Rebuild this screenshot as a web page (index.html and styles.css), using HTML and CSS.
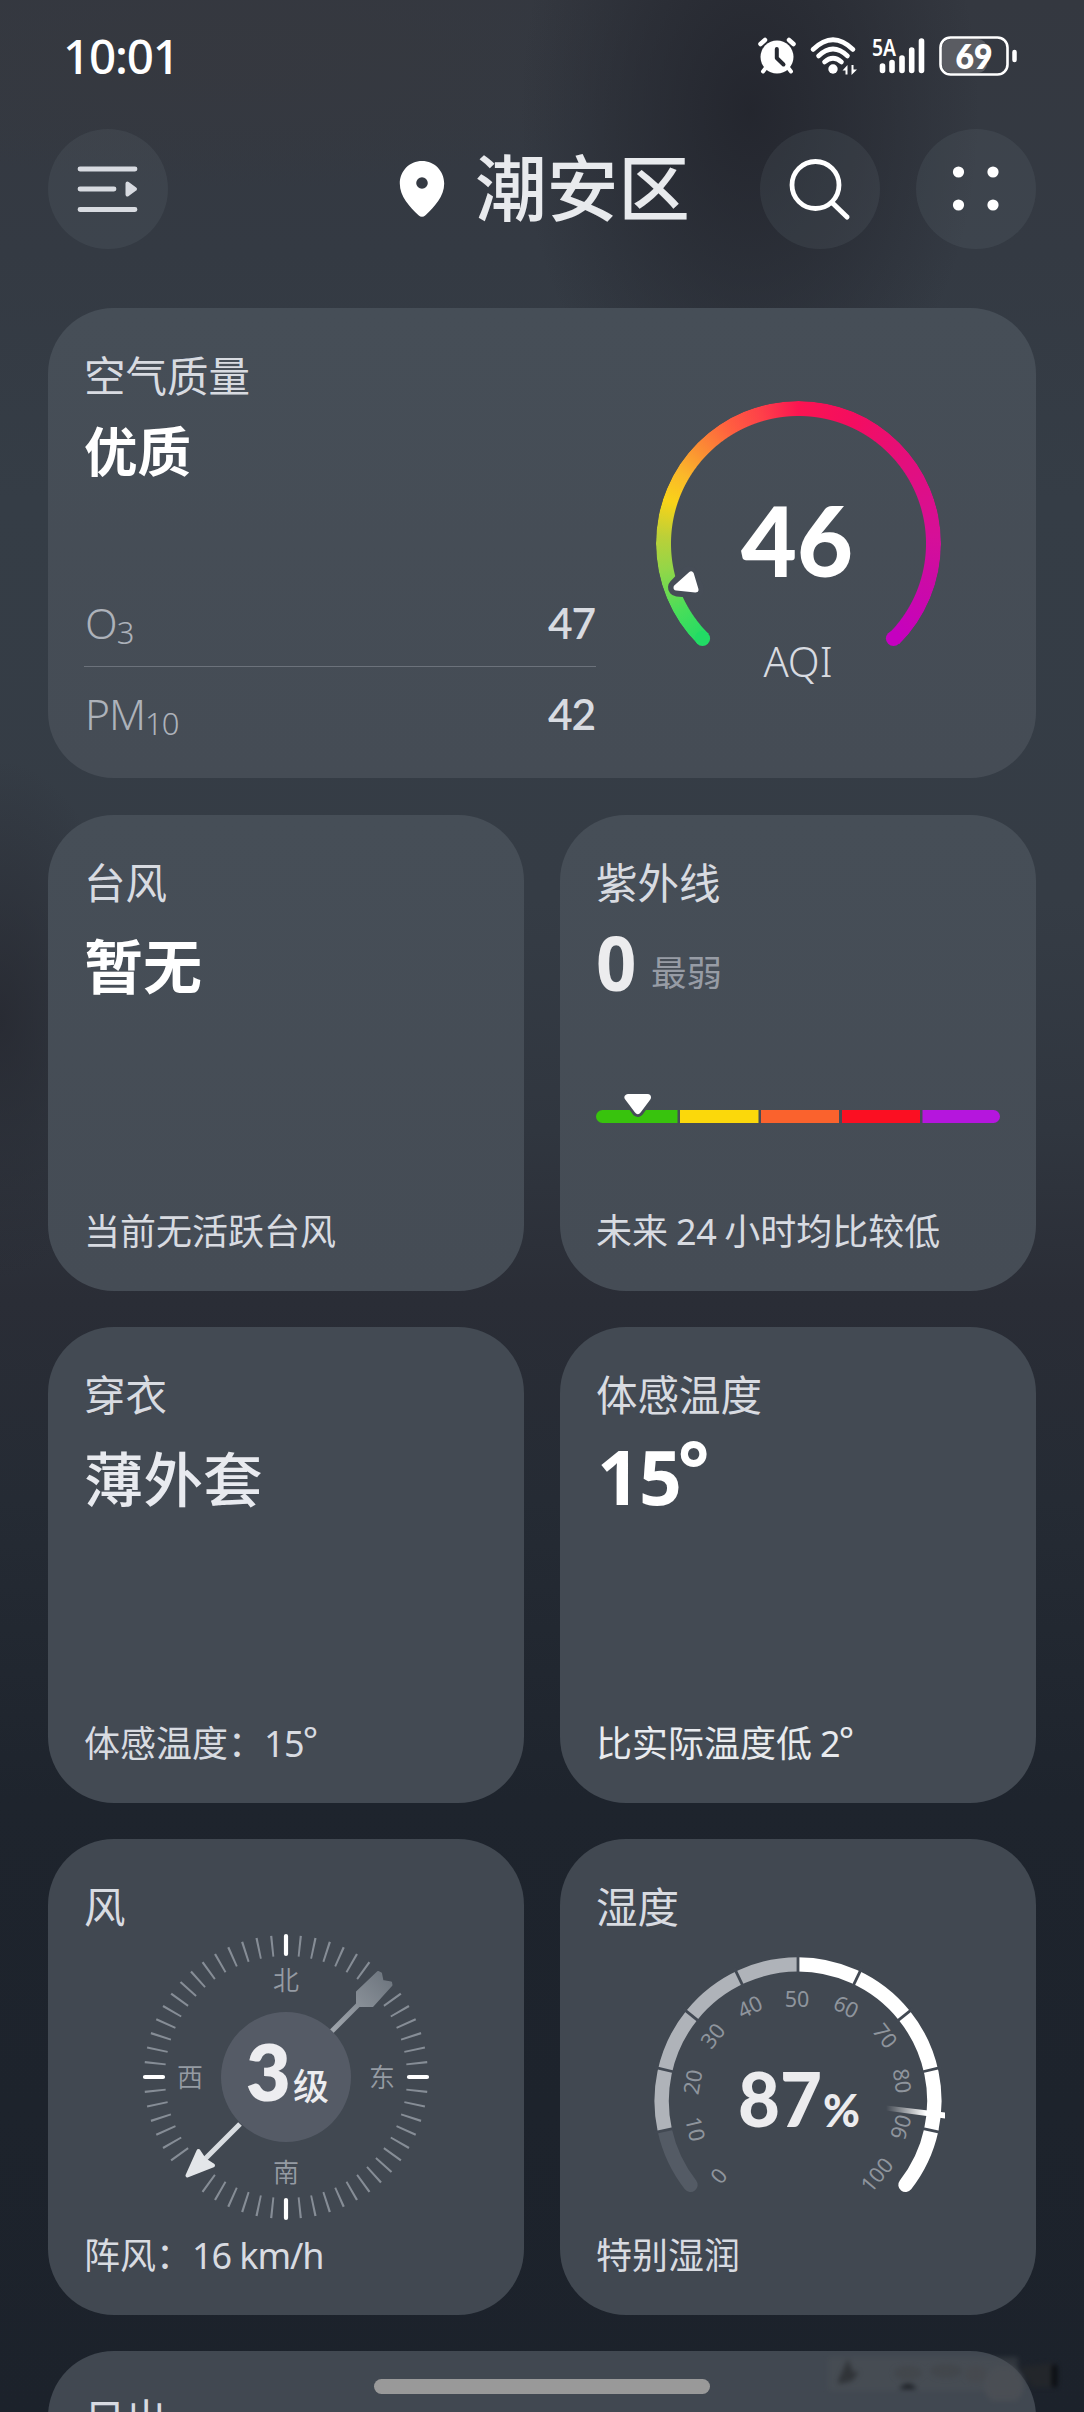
FILE: index.html
```
<!DOCTYPE html>
<html lang="zh-CN">
<head>
<meta charset="utf-8">
<title>天气</title>
<link rel="stylesheet" href="styles.css">
</head>
<body>
<div class="screen">
  <div class="status">
    <span class="clock">10:01</span>
    <div class="indicators">
      <svg class="alarm" width="38" height="38" viewBox="0 0 38 38">
        <g stroke="#fff" stroke-linecap="round" fill="none">
          <path d="M2.500 7 7 3M35.500 7 31 3" stroke-width="4.500"/>
          <path d="M8.500 30 5 34.500M29.500 30 33 34.500" stroke-width="4"/>
        </g>
        <circle cx="19" cy="20" r="16.500" fill="#fff"/>
        <path d="M18.800 12V21L25.500 27.500" fill="none" stroke="#262931" stroke-width="4" stroke-linecap="round" stroke-linejoin="round"/>
      </svg>
      <svg class="wifi" width="47" height="38" viewBox="0 0 47 38">
        <g fill="none" stroke="#fff" stroke-width="4.600" stroke-linecap="round">
          <path d="M3 12.500Q23 -7 43 12.500"/>
          <path d="M8.500 19Q23 5 37.500 19"/>
          <path d="M14.500 25Q23 17.500 31.500 25"/>
        </g>
        <circle cx="23" cy="32" r="4.700" fill="#fff"/>
        <path d="M32.500 33.500 37.500 28V37.500H35.500V33.500ZM47 32.500 41.500 38V28H43.500V32.500Z" fill="#fff"/>
      </svg>
      <svg class="signal" width="53" height="38" viewBox="0 0 53 38">
        <text x="0" y="19" class="net" textLength="24" lengthAdjust="spacingAndGlyphs">5A</text>
        <path d="M10.500 29V33.500M20 25.500V33.500M30 21V33.500M39.700 13V33.500M49.500 4V33.500" stroke="#fff" stroke-width="5.600" stroke-linecap="round"/>
      </svg>
      <svg class="battery" width="78" height="42" viewBox="0 0 78 42">
        <rect x="3" y="4" width="45" height="34" rx="9" fill="#5a5c62"/>
        <rect x="1.500" y="2.500" width="67" height="37" rx="10" fill="none" stroke="#fff" stroke-width="2.600"/>
        <path d="M75.500 17V25" stroke="#fff" stroke-width="4.500" stroke-linecap="round"/>
        <text x="35" y="34" class="charge" text-anchor="middle" textLength="37" lengthAdjust="spacingAndGlyphs">69</text>
      </svg>
    </div>
  </div>

  <header class="topbar">
    <button class="round" aria-label="城市列表">
      <svg width="120" height="120" viewBox="0 0 120 120">
        <path d="M32 40H87M32 60H66M32 80.500H87" stroke="#d8dbe1" stroke-width="4.800" stroke-linecap="round"/>
        <path d="M79.500 54.500 87 60 79.500 65.500Z" fill="#d8dbe1" stroke="#d8dbe1" stroke-width="4" stroke-linejoin="round"/>
      </svg>
    </button>
    <div class="place">
      <svg width="46" height="58" viewBox="0 0 46 58">
        <path fill="#fff" fill-rule="evenodd" d="M23 1C10.500 1 .8 11 .8 23.500.8 36.500 10.500 46.500 19.500 55.300Q23 58.300 26.500 55.300C35.500 46.500 45.200 36.500 45.200 23.500 45.200 11 35.500 1 23 1ZM23 17.200a5.800 5.800 0 1 0 0 11.600 5.800 5.800 0 0 0 0-11.600Z"/>
      </svg>
      <h1>潮安区</h1>
    </div>
    <div class="actions">
      <button class="round" aria-label="搜索">
        <svg width="120" height="120" viewBox="0 0 120 120" fill="none" stroke="#fff" stroke-linecap="round">
          <circle cx="55.500" cy="56" r="23.500" stroke-width="4.800"/>
          <path d="M73 74.500 87 88" stroke-width="5"/>
        </svg>
      </button>
      <button class="round" aria-label="更多">
        <svg width="120" height="120" viewBox="0 0 120 120" fill="#fff">
          <circle cx="42.500" cy="43" r="5.600"/><circle cx="77" cy="43" r="5.600"/>
          <circle cx="42.500" cy="76" r="5.600"/><circle cx="77" cy="76" r="5.600"/>
        </svg>
      </button>
    </div>
  </header>

  <main class="cards">
    <section class="card air">
      <div class="air-info">
        <h2>空气质量</h2>
        <p class="value grade">优质</p>
        <dl class="pollutants">
          <div><dt>O<sub>3</sub></dt><dd>47</dd></div>
          <div><dt>PM<sub>10</sub></dt><dd>42</dd></div>
        </dl>
      </div>
      <div class="air-gauge">
        <div class="spectrum"></div>
        <svg class="overlay" width="300" height="300" viewBox="-150 -150 300 300">
          <circle cx="-95.500" cy="95.500" r="7.600" fill="#22dc65"/>
          <circle cx="95.500" cy="95.500" r="7.600" fill="#c500c0"/>
          <path d="M-121 44.500-109 32-103 46Z" fill="#464d57" stroke="#464d57" stroke-width="18" stroke-linejoin="round"/>
          <path d="M-121.500 44.500-107 31.500-102.500 46.500Z" fill="#fff" stroke="#fff" stroke-width="6" stroke-linejoin="round"/>
          <text class="aqi-number" x="-1" y="34" text-anchor="middle" textLength="112" lengthAdjust="spacingAndGlyphs">46</text>
          <text class="aqi-unit" x="0" y="134" text-anchor="middle">AQI</text>
        </svg>
      </div>
    </section>

    <section class="card">
      <h2>台风</h2>
      <p class="value">暂无</p>
      <p class="note">当前无活跃台风</p>
    </section>

    <section class="card">
      <h2>紫外线</h2>
      <p class="value uv-value"><b class="soft">0</b><span class="level">最弱</span></p>
      <svg class="uv" width="404" height="34" viewBox="0 0 404 34">
        <path d="M6.500 17H81.500V30H6.500A6.500 6.500 0 0 1 6.500 17Z" fill="#38c30d"/>
        <path d="M84 17H162.500V30H84Z" fill="#fbd80b"/>
        <path d="M165 17H243V30H165Z" fill="#fa622d"/>
        <path d="M246 17H324V30H246Z" fill="#fb0f22"/>
        <path d="M326.500 17H397.500A6.500 6.500 0 0 1 397.500 30H326.500Z" fill="#b516dd"/>
        <path d="M32 4.500H51.500L41.800 18Z" fill="#464d57" stroke="#464d57" stroke-width="12" stroke-linejoin="round"/>
        <path d="M32 4.500H51.500L41.800 17.500Z" fill="#fff" stroke="#fff" stroke-width="7" stroke-linejoin="round"/>
      </svg>
      <p class="note">未来 <span class="latin">24</span> 小时均比较低</p>
    </section>

    <section class="card">
      <h2>穿衣</h2>
      <p class="value medium">薄外套</p>
      <p class="note">体感温度：<span class="latin">15<i class="deg">°</i></span></p>
    </section>

    <section class="card">
      <h2>体感温度</h2>
      <p class="value number">15<i class="deg">°</i></p>
      <p class="note bright">比实际温度低 <span class="latin">2<i class="deg">°</i></span></p>
    </section>

    <section class="card">
      <h2>风</h2>
      <svg class="compass" width="300" height="300" viewBox="-150 -150 300 300">
        <defs>
          <linearGradient id="tail" gradientUnits="userSpaceOnUse" x1="45" y1="-45" x2="104" y2="-104">
            <stop offset="0" stop-color="#a0a6ad"/><stop offset="1" stop-color="#6c747d"/>
          </linearGradient>
        </defs>
        <circle r="131.500" class="ticks" pathLength="360" transform="rotate(-90)"/>
        <path d="M0-141V-123M0 141V123M-141 0H-123M141 0H123" stroke="#fff" stroke-width="4.200" stroke-linecap="round"/>
        <path d="M45-45 72-72" stroke="url(#tail)" stroke-width="5"/>
        <path d="M71-71V-85L92-105 95-103.500 96.500-96 105-94.500 105.500-92 86.500-71Z" fill="url(#tail)" stroke="url(#tail)" stroke-width="2" stroke-linejoin="round"/>
        <path d="M-46 47-82 83" stroke="#d9dde1" stroke-width="5.200"/>
        <path d="M-98.500 98.500-87.500 74-81.500 83-73 88.500Z" fill="#e3e6e9" stroke="#e3e6e9" stroke-width="4" stroke-linejoin="round"/>
        <circle r="65" fill="#555b66"/>
        <g class="dirs" text-anchor="middle">
          <text x="0" y="-87">北</text><text x="96" y="10">东</text>
          <text x="0" y="105">南</text><text x="-96" y="10">西</text>
        </g>
        <text class="force" x="-40" y="24">3</text>
        <text class="force-unit" x="7" y="23">级</text>
      </svg>
      <p class="note">阵风：<span class="latin wind-speed">16 km/h</span></p>
    </section>

    <section class="card">
      <h2>湿度</h2>
      <svg class="humidity" width="300" height="250" viewBox="-150 -150 300 250">
        <defs>
          <linearGradient id="needle" gradientUnits="userSpaceOnUse" x1="88" y1="0" x2="128" y2="0">
            <stop offset="0" stop-color="#fff" stop-opacity="0"/><stop offset="1" stop-color="#fff"/>
          </linearGradient>
        </defs>
        <g fill="none" stroke-width="14.400">
          <g stroke-linecap="round">
            <path d="M-107.500 83.900A136.400 136.400 0 0 1-133.200 29.300" stroke="#545b65"/>
            <path d="M107.500 83.900A136.400 136.400 0 0 0 133.200 29.300" stroke="#fff"/>
          </g>
          <path d="M-133.200 29.300A136.600 136.600 0 0 1 0-136.600" stroke="#afb3b9"/>
          <path d="M133.200 29.300A136.600 136.600 0 0 0 0-136.600" stroke="#fff"/>
        </g>
        <g stroke="#424953" stroke-width="2.800">
          <path d="M0-127V-147"/>
          <path d="M0-127V-147" transform="rotate(25.600)"/>
          <path d="M0-127V-147" transform="rotate(51.200)"/>
          <path d="M0-127V-147" transform="rotate(76.800)"/>
          <path d="M0-127V-147" transform="rotate(102.400)"/>
          <path d="M0-127V-147" transform="rotate(-25.600)"/>
          <path d="M0-127V-147" transform="rotate(-51.200)"/>
          <path d="M0-127V-147" transform="rotate(-76.800)"/>
          <path d="M0-127V-147" transform="rotate(-102.400)"/>
        </g>
        <path d="M88 4.500 147 11.500V17.500L88 9.500Z" fill="url(#needle)"/>
        <g class="scale" text-anchor="middle">
          <text transform="translate(-79 75) rotate(-50)" y="7.500">0</text>
          <text transform="translate(-103 28) rotate(77)" y="7.500">10</text>
          <text transform="translate(-105 -19) rotate(-80)" y="7.500">20</text>
          <text transform="translate(-85 -65) rotate(-52)" y="7.500">30</text>
          <text transform="translate(-48 -94) rotate(-26)" y="7.500">40</text>
          <text transform="translate(-1 -102)" y="7.500">50</text>
          <text transform="translate(48 -94) rotate(26)" y="7.500">60</text>
          <text transform="translate(87 -65) rotate(52)" y="7.500">70</text>
          <text transform="translate(104 -20) rotate(82)" y="7.500">80</text>
          <text transform="translate(103 26) rotate(-73)" y="7.500">90</text>
          <text transform="translate(79 74) rotate(-50)" y="7.500">100</text>
        </g>
        <text class="percent" x="-60" y="25.500" textLength="84" lengthAdjust="spacingAndGlyphs">87</text>
        <text class="percent-sign" x="25" y="25.500" textLength="37" lengthAdjust="spacingAndGlyphs">%</text>
      </svg>
      <p class="note">特别湿润</p>
    </section>

    <section class="card last">
      <h2>日出</h2>
    </section>
  </main>

  <svg class="smudge" width="250" height="50" viewBox="0 0 250 50">
    <rect x="18" y="6" width="190" height="34" fill="#4d5157" opacity=".45"/>
    <circle cx="194" cy="34" r="20" fill="#4b4f55"/>
    <path d="M28 30 38 8 43 21 49 21 42 30 29 33Z" fill="#2f3236"/>
    <path d="M89 38Q98 28 107 38Z" fill="#16191e"/>
    <path d="M210 16 244 12V36H222Z" fill="#24272b"/>
    <path d="M242 14H247V36H242Z" fill="#07090c"/>
    <ellipse cx="98" cy="22" rx="14" ry="7" fill="#43474c"/>
    <ellipse cx="136" cy="20" rx="16" ry="7" fill="#43474c"/>
    <ellipse cx="166" cy="23" rx="11" ry="8" fill="#474a4f"/>
  </svg>
  <div class="home-bar"></div>
</div>
</body>
</html>
```
FILE: styles.css
```
* { box-sizing: border-box; margin: 0; padding: 0; }

body {
  background: #1c222b;
  color: #d8dbe1;
  font-family: "Noto Sans CJK SC", "Noto Sans", sans-serif;
}

.screen {
  position: relative;
  width: 1084px;
  height: 2412px;
  overflow: hidden;
  background:
    radial-gradient(ellipse 230px 350px at 750px 110px, rgba(33, 35, 43, .85), rgba(33, 35, 43, .45) 50%, transparent),
    radial-gradient(ellipse 130px 260px at 0 1020px, rgba(38, 40, 48, .8), transparent),
    radial-gradient(ellipse 420px 130px at 240px 60px, rgba(54, 56, 63, .8), transparent),
    linear-gradient(#343840 0, #343a43 250px, #353d46 500px, #353c45 900px, #30363f 1130px, #2a2d36 1300px, #252b34 1500px, #1e242d 1800px, #1c222b 2412px);
}

.status {
  display: flex;
  justify-content: space-between;
  align-items: center;
  height: 112px;
  padding: 0 67px 0 63px;
}
.status svg { overflow: visible; }
.clock { font: 500 47.500px/1 "Noto Sans", sans-serif; color: #fff; letter-spacing: -1.200px; }
.indicators { display: flex; align-items: center; gap: 14.500px; }
.net { font: 600 24px "Noto Sans", sans-serif; fill: #fff; }
.charge { font: 800 34px Lato, sans-serif; fill: #fff; }

.topbar {
  display: flex;
  align-items: center;
  justify-content: space-between;
  height: 120px;
  margin: 17px 48px 59px;
}
.round {
  display: block;
  width: 120px;
  height: 120px;
  border: 0;
  border-radius: 50%;
  background: rgba(125, 140, 150, .13);
}
.round svg { display: block; }
.place { display: flex; align-items: center; gap: 30px; margin-left: 161px; }
.place h1 { font-size: 71.500px; line-height: 100px; font-weight: 500; color: #e8eaed; transform: translateY(-5px); }
.actions { display: flex; gap: 36px; }

.cards {
  display: grid;
  grid-template-columns: 476px 476px;
  grid-template-rows: 470px 476px 476px 476px 476px;
  gap: 36px;
  padding: 0 48px;
}
.card {
  display: flex;
  flex-direction: column;
  padding: 36px;
  border-radius: 66px;
  background: linear-gradient(#464e57, #454c55);
}
.card:nth-child(n+4) { background: #434a53; }
.card:nth-child(n+6) { background: #414851; }

h2 { font-size: 41.500px; line-height: 60px; font-weight: 400; white-space: nowrap; }
.value { margin-top: 13px; height: 80px; font-size: 59px; line-height: 80px; font-weight: 700; color: #fff; }
.value.medium { font-weight: 500; font-size: 59.500px; color: #e8eaef; }
.value.grade { margin-top: 5px; font-size: 53.500px; }
.value.number { margin-top: 13px; font-family: "Noto Sans", sans-serif; font-size: 75px; letter-spacing: -1px; padding-left: 1px; }
.value.uv-value { display: flex; align-items: baseline; margin-top: 11px; gap: 14px; }
.soft { font: 700 76px/80px "Open Sans", sans-serif; color: #ececee; transform: scaleX(.93); transform-origin: 0 50%; width: 41px; }
.level {
  font: 400 35.500px/50px "Noto Sans CJK SC", sans-serif;
  color: #979ca5;
  transform: translateY(-5px);
}
.note { margin-top: auto; font-size: 36px; line-height: 50px; height: 50px; white-space: nowrap; transform: translateY(-1px); }
.note.bright { color: #e8eaee; }
.latin { font-family: "Noto Sans", sans-serif; letter-spacing: -.5px; }
.wind-speed { letter-spacing: -1.100px; }
.deg { font-style: normal; vertical-align: .12em; line-height: 0; margin-left: -.04em; }

.card.air, .card.last { grid-column: span 2; }
.card.air { flex-direction: row; padding-bottom: 20px; margin-bottom: -1px; height: 470px; }
.cards { grid-template-rows: 471px 476px 476px 476px 476px; }
.air-info { display: flex; flex-direction: column; width: 512px; }
.pollutants { margin-top: auto; font-family: "Noto Sans", sans-serif; font-size: 42.500px; }
.pollutants div {
  display: flex;
  justify-content: space-between;
  height: 91px;
  padding: 4px 1px 0;
  line-height: 88px;
}
.pollutants div + div { border-top: 1px solid #6c727b; height: 92px; padding-top: 3px; }
.pollutants dt { color: #adb2ba; font-weight: 350; letter-spacing: -1px; }
.pollutants sub { font-size: 31px; line-height: 0; vertical-align: -5px; }
.pollutants dd { font-family: Lato, sans-serif; font-weight: 600; letter-spacing: -1.200px; }
.air-gauge { position: relative; width: 300px; height: 300px; margin: 49px 0 0 52px; }
.spectrum {
  position: absolute;
  inset: 7.500px;
  border-radius: 50%;
  background: conic-gradient(from 225deg,
    #22dc65 0, #4ade59 16deg, #93d648 34deg, #bcd038 48deg, #f9d318 63deg,
    #fbb72a 76deg, #fb9033 88deg, #ff5d40 105deg, #fe4049 119deg, #fb1551 135deg,
    #f40d60 159deg, #e30f7c 187deg, #d60f98 222deg, #cc0ba5 240deg, #c500c0 270deg, transparent 270deg);
  -webkit-mask: radial-gradient(circle, transparent 127px, #000 128px);
  mask: radial-gradient(circle, transparent 127px, #000 128px);
}
.overlay { position: absolute; inset: 0; overflow: visible; }
.aqi-number { font: 900 98px Lato, sans-serif; fill: #fff; }
.aqi-unit { font: 350 41.500px "Noto Sans", sans-serif; fill: #d8dbe1; }

.uv { display: block; margin: 91px 0 0; overflow: visible; }

.compass, .humidity { display: block; align-self: center; overflow: visible; flex: none; }
.compass { margin: -8px 0 0; }
.humidity { margin: 16px 0 0; }
.ticks {
  fill: none;
  stroke: #868d96;
  stroke-width: 21;
  stroke-dasharray: 0 5.550 .9 5.100 .9 5.100 .9 5.100 .9 5.100 .9 5.100 .9 17.100
    .9 5.100 .9 5.100 .9 5.100 .9 5.100 .9 5.100 .9 11.100
    .9 5.100 .9 5.100 .9 5.100 .9 5.100 .9 5.100 .9 5.100 .9 5.100 .9 5.100 .9 5.100 .9 5.100 .9 5.100 .9 5.100 .9 5.100 .9 5.550;
}
.dirs { font: 350 26px "Noto Sans CJK SC", sans-serif; fill: #959ba3; }
.force { font: 800 77px Lato, sans-serif; fill: #ededf0; }
.force-unit { font: 500 36px "Noto Sans CJK SC", sans-serif; fill: #ededf0; }
.scale { font: 400 21.500px "Noto Sans", sans-serif; fill: #8f959d; }
.percent { font: 900 76px Lato, sans-serif; fill: #ececee; }
.percent-sign { font: 900 45px Lato, sans-serif; fill: #ececee; }

.smudge { position: absolute; left: 810px; top: 2351px; filter: blur(2.500px); opacity: .9; }
.home-bar {
  position: absolute;
  left: 374px;
  top: 2379px;
  width: 336px;
  height: 15px;
  border-radius: 8px;
  background: #999;
}
```
